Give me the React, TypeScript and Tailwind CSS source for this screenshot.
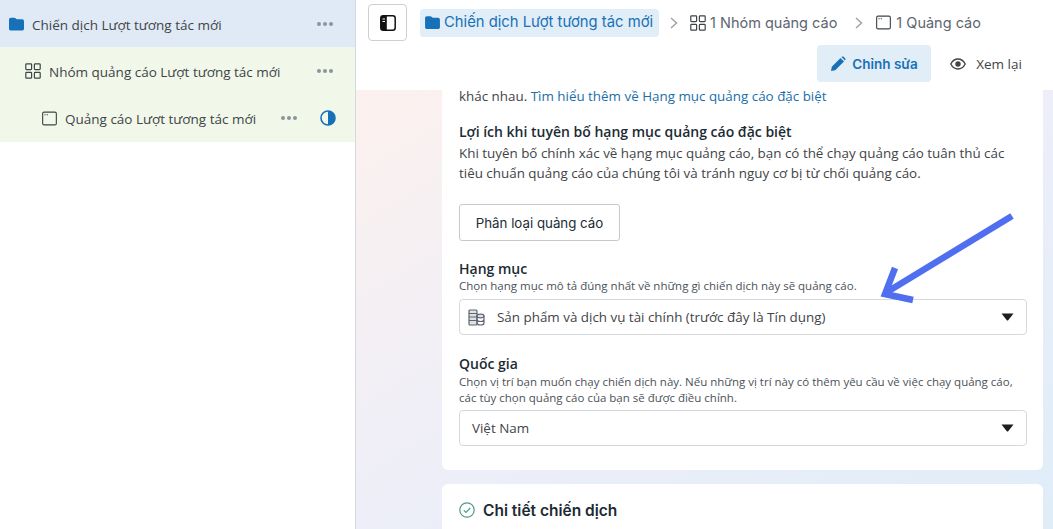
const FolderIcon = ({ className }: { className: string }) => (
  <svg className={className} viewBox="0 0 16 14" fill="#1771b8">
    <path d="M0 2.200C0 1 .9.2 2 .2h3.600c.6 0 1 .2 1.400.6L8.200 2H14c1.100 0 2 .9 2 2v8c0 1.100-.9 2-2 2H2c-1.100 0-2-.9-2-2z" />
  </svg>
);

const GridIcon = ({ className }: { className: string }) => (
  <svg className={className} viewBox="0 0 16 16" fill="none" stroke="#3f4448" strokeWidth="1.200">
    <rect x="0.800" y="0.800" width="5.800" height="5.800" rx="0.800" />
    <rect x="9.400" y="0.800" width="5.800" height="5.800" rx="0.800" />
    <rect x="0.800" y="9.400" width="5.800" height="5.800" rx="0.800" />
    <rect x="9.400" y="9.400" width="5.800" height="5.800" rx="0.800" />
  </svg>
);

const AdIcon = ({ className }: { className: string }) => (
  <svg className={className} viewBox="0 0 16 16" fill="none" stroke="#3f4448" strokeWidth="1.200">
    <rect x="0.700" y="1.200" width="14.600" height="13.600" rx="1.500" />
    <path d="M2.600 4h1.300M5 4h1.300" />
  </svg>
);

const Dots = () => (
  <div className="flex gap-[2px]">
    <span className="w-[4px] h-[4px] rounded-full bg-[#8d949c]" />
    <span className="w-[4px] h-[4px] rounded-full bg-[#8d949c]" />
    <span className="w-[4px] h-[4px] rounded-full bg-[#8d949c]" />
  </div>
);

const Caret = () => (
  <svg className="w-[13px] h-[8px]" viewBox="0 0 13 8" fill="#1c1e21">
    <path d="M0.500 0.500h12L7.200 7.200c-.4.4-1 .4-1.400 0z" />
  </svg>
);

const Chevron = ({ className }: { className: string }) => (
  <svg className={`w-[10px] h-[12px] ${className}`} viewBox="0 0 10 12" fill="none" stroke="#9aa0a6" strokeWidth="1.400">
    <path d="M2 1l5.500 5L2 11" />
  </svg>
);

const App = () => {
  return (
    <div className="w-[1053px] h-[529px] flex overflow-hidden bg-white text-[#1c2b33] font-['Open_Sans',sans-serif]">
      <aside className="w-[356px] h-full border-r border-[#d5d8dc] shrink-0 text-[13.500px] text-[#3f4448]">
        <div className="h-[47px] bg-[#dfeaf6] flex items-center pl-[9px] pr-[22px]">
          <FolderIcon className="w-[15px] h-[14px] mr-[8px]" />
          <span className="flex-1 mt-[3px]">Chiến dịch Lượt tương tác mới</span>
          <Dots />
        </div>
        <div className="h-[47px] bg-[#f1f8ea] flex items-center pl-[25px] pr-[22px]">
          <GridIcon className="w-[16px] h-[16px] mr-[8px]" />
          <span className="flex-1 mt-[3px]">Nhóm quảng cáo Lượt tương tác mới</span>
          <Dots />
        </div>
        <div className="h-[48px] bg-[#f1f8ea] flex items-center pl-[42px] pr-[19px]">
          <AdIcon className="w-[15px] h-[15px] mr-[8px]" />
          <span className="flex-1 mt-[3px]">Quảng cáo Lượt tương tác mới</span>
          <Dots />
          <svg className="w-[16px] h-[16px] ml-[23px]" viewBox="0 0 16 16">
            <circle cx="8" cy="8" r="7" fill="none" stroke="#1771b8" strokeWidth="1.600" />
            <path d="M8 1a7 7 0 0 1 0 14z" fill="#1771b8" />
          </svg>
        </div>
      </aside>

      <main className="flex-1 h-full flex flex-col min-w-0">
        <header className="h-[90px] shrink-0 bg-white pl-[12px] pr-[18px] pt-[4px]">
          <div className="flex items-center h-[37px] font-['Inter',sans-serif] text-[14.500px] text-[#5d6670]">
            <button className="w-[39px] h-[37px] border border-[#ccd0d5] rounded-[4px] flex items-center justify-center mr-[13px]">
              <svg className="w-[16px] h-[16px]" viewBox="0 0 16 16">
                <rect x="0.800" y="0.800" width="14.400" height="14.400" rx="2.500" fill="none" stroke="#111" strokeWidth="1.500" />
                <path d="M3 .8h3.800v14.400H3A2.200 2.200 0 0 1 .8 13V3A2.200 2.200 0 0 1 3 .8z" fill="#111" />
                <path d="M2.500 4h2.500M2.500 6.500h2.500" stroke="#fff" strokeWidth="1" />
              </svg>
            </button>
            <div className="h-[28px] w-[239px] flex items-center bg-[#e1edf7] rounded-[4px] px-[5px] text-[14.800px] text-[#1771b8] whitespace-nowrap">
              <FolderIcon className="w-[15px] h-[13px] mr-[4px]" />
              <span>Chiến dịch Lượt tương tác mới</span>
            </div>
            <Chevron className="ml-[10px] mr-[11px]" />
            <GridIcon className="w-[16px] h-[16px] mr-[4px]" />
            <span className="whitespace-nowrap">1 Nhóm quảng cáo</span>
            <Chevron className="ml-[17px] mr-[12px]" />
            <AdIcon className="w-[15px] h-[15px] mr-[5px]" />
            <span className="whitespace-nowrap">1 Quảng cáo</span>
          </div>
          <div className="flex justify-end items-center mt-[4px] text-[13.500px]">
            <button className="w-[114px] h-[37px] rounded-[4px] bg-[#e1edf7] text-[#1771b8] font-semibold flex items-center justify-center gap-[6px] font-['Inter',sans-serif]">
              <svg className="w-[16px] h-[16px]" viewBox="0 0 16 16" fill="#1771b8">
                <path d="M1 15l.8-4.200L10.500 2l3.500 3.500L5.200 14.200zM11.500 1l.7-.4c.5-.3 1-.2 1.400.2l1.600 1.600c.4.400.5 1 .1 1.400l-.4.700z" />
              </svg>
              <span className="mt-[2px]">Chỉnh sửa</span>
            </button>
            <div className="w-[104px] pl-[6px] flex items-center justify-center gap-[10px] text-[#3f4448]">
              <svg className="w-[16px] h-[12px]" viewBox="0 0 16 12" fill="none" stroke="#3f4448" strokeWidth="1.400">
                <path d="M.8 6C2.500 2.700 5 1 8 1s5.500 1.700 7.200 5C13.500 9.300 11 11 8 11S2.500 9.300.8 6z" />
                <circle cx="8" cy="6" r="2" fill="#3f4448" />
              </svg>
              <span className="mt-[2px]">Xem lại</span>
            </div>
          </div>
        </header>

        <section className="relative flex-1 min-h-0 bg-linear-to-br from-[#fcf1ee] via-[#edeef8] to-[#dfedf8] pl-[86px] pr-[10px]">
          <div className="bg-white rounded-b-[6px] h-[380px] px-[17px] pr-[16px] text-[14px] leading-[20px] text-[#3f4448]">
            <p className="h-[12px] leading-[12px] text-[13.400px] whitespace-nowrap">
              khác nhau. <span className="text-[#1a6fa8]">Tìm hiểu thêm về Hạng mục quảng cáo đặc biệt</span>
            </p>
            <h3 className="mt-[20px] font-semibold text-[#1c2b33] text-[14px]">Lợi ích khi tuyên bố hạng mục quảng cáo đặc biệt</h3>
            <p className="text-[13.400px] mt-[1px]">
              Khi tuyên bố chính xác về hạng mục quảng cáo, bạn có thể chạy quảng cáo tuân thủ các
              <br />
              tiêu chuẩn quảng cáo của chúng tôi và tránh nguy cơ bị từ chối quảng cáo.
            </p>
            <button className="block mt-[21px] w-[161px] h-[37px] border border-[#c4cacf] rounded-[3px] font-['Inter',sans-serif] text-[13.300px] text-[#1c2b33]">
              Phân loại quảng cáo
            </button>

            <h3 className="mt-[18px] font-semibold text-[#1c2b33] leading-[20px]">Hạng mục</h3>
            <p className="text-[11.500px] leading-[14px] text-[#4b5259] whitespace-nowrap">
              Chọn hạng mục mô tả đúng nhất về những gì chiến dịch này sẽ quảng cáo.
            </p>
            <div className="mt-[6px] h-[36px] border border-[#d5d8dc] rounded-[4px] flex items-center pl-[8px] pr-[12px]">
              <svg className="w-[17px] h-[17px] mr-[12px]" viewBox="0 0 17 17" fill="none" stroke="#5d6670" strokeWidth="1.200">
                <rect x="1" y="1" width="8" height="15" rx="1" fill="#dfe2e5" />
                <path d="M1 4.500h8M1 8h8M1 11.500h8" />
                <ellipse cx="12.500" cy="7" rx="3.500" ry="1.800" fill="#dfe2e5" />
                <path d="M9 7v7c0 1 1.500 2 3.500 2s3.500-1 3.500-2V7M9 10.500c0 1 1.500 2 3.500 2s3.500-1 3.500-2" />
              </svg>
              <span className="flex-1 text-[13.400px]">Sản phẩm và dịch vụ tài chính (trước đây là Tín dụng)</span>
              <Caret />
            </div>

            <h3 className="mt-[19px] font-semibold text-[#1c2b33] leading-[20px]">Quốc gia</h3>
            <p className="text-[11.500px] leading-[16px] text-[#4b5259] whitespace-nowrap">
              Chọn vị trí bạn muốn chạy chiến dịch này. Nếu những vị trí này có thêm yêu cầu về việc chạy quảng cáo,
              <br />
              các tùy chọn quảng cáo của bạn sẽ được điều chỉnh.
            </p>
            <div className="mt-[4px] h-[36px] border border-[#d5d8dc] rounded-[4px] flex items-center pl-[12px] pr-[12px]">
              <span className="flex-1 text-[13.400px]">Việt Nam</span>
              <Caret />
            </div>
          </div>

          <div className="mt-[14px] bg-white rounded-t-[6px] h-[45px] px-[17px] pt-[17px] flex items-start gap-[8px]">
            <svg className="w-[16px] h-[16px] mt-[1px]" viewBox="0 0 16 16" fill="none" stroke="#4f9a8a" strokeWidth="1.200">
              <circle cx="8" cy="8" r="7.200" />
              <path d="M4.800 8.300l2.200 2.200 4.200-4.500" />
            </svg>
            <span className="font-['Inter',sans-serif] font-semibold text-[15.500px] leading-[20px] text-[#1c2b33]">Chi tiết chiến dịch</span>
          </div>

          {/* mui ten chu thich */}
          <svg className="absolute left-[515px] top-[120px] w-[150px] h-[95px]" viewBox="0 0 150 95" fill="none" stroke="#4f6ef0" strokeWidth="6.500">
            <path d="M141 6L16 82" />
            <path d="M24 58L14 84L42 90" />
          </svg>
        </section>
      </main>
    </div>
  );
};

export default App;
